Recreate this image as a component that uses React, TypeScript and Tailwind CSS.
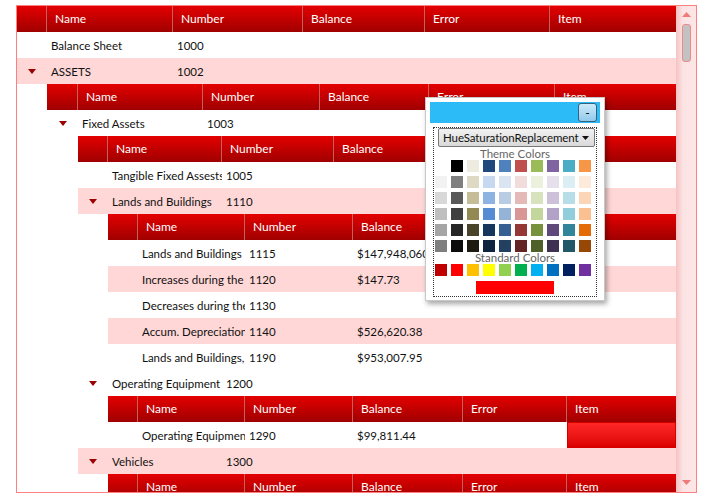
import React from 'react';

type Node = {
  name: string;
  number: string;
  balance?: string;
  selected?: boolean;
  children?: Node[];
};

const COLS = [
  'grid-cols-[126fr_130fr_122fr_125fr_126fr]',
  'grid-cols-[125fr_117fr_109fr_126fr_121fr]',
  'grid-cols-[114fr_112fr_114fr_114fr_114fr]',
  'grid-cols-[107fr_108fr_110fr_104fr_109fr]',
];
const IND = ['w-[30px]', 'w-[31px]', 'w-[30px]', 'w-[30px]'];
const HEADERS = ['Name', 'Number', 'Balance', 'Error', 'Item'];

const data: Node[] = [
  { name: 'Balance Sheet', number: '1000' },
  {
    name: 'ASSETS',
    number: '1002',
    children: [
      {
        name: 'Fixed Assets',
        number: '1003',
        children: [
          { name: 'Tangible Fixed Assests', number: '1005' },
          {
            name: 'Lands and Buildings',
            number: '1110',
            children: [
              { name: 'Lands and Buildings', number: '1115', balance: '$147,948,060' },
              { name: 'Increases during the Year', number: '1120', balance: '$147.73' },
              { name: 'Decreases during the Year', number: '1130' },
              { name: 'Accum. Depreciation, Buildings', number: '1140', balance: '$526,620.38' },
              { name: 'Lands and Buildings, Total', number: '1190', balance: '$953,007.95' },
            ],
          },
          {
            name: 'Operating Equipment',
            number: '1200',
            children: [
              { name: 'Operating Equipment, Total', number: '1290', balance: '$99,811.44', selected: true },
            ],
          },
          {
            name: 'Vehicles',
            number: '1300',
            children: [{ name: 'Vehicles', number: '1310', balance: '$12,500.00' }],
          },
        ],
      },
    ],
  },
];

const THEME = [
  ['#ffffff', '#000000', '#eeece1', '#1f497d', '#4f81bd', '#c0504d', '#9bbb59', '#8064a2', '#4bacc6', '#f79646'],
  ['#f2f2f2', '#7f7f7f', '#ddd9c3', '#c6d9f0', '#dbe5f1', '#f2dcdb', '#ebf1dd', '#e5e0ec', '#dbeef3', '#fdeada'],
  ['#d8d8d8', '#595959', '#c4bd97', '#8db3e2', '#b8cce4', '#e5b9b7', '#d7e3bc', '#ccc1d9', '#b7dde8', '#fbd5b5'],
  ['#bfbfbf', '#3f3f3f', '#938953', '#548dd4', '#95b3d7', '#d99694', '#c3d69b', '#b2a2c7', '#92cddc', '#fac08f'],
  ['#a5a5a5', '#262626', '#494429', '#17365d', '#366092', '#953734', '#76923c', '#5f497a', '#31859b', '#e36c09'],
  ['#7f7f7f', '#0c0c0c', '#1d1b10', '#0f243e', '#244061', '#632423', '#4f6128', '#3f3151', '#205867', '#974806'],
];
const STANDARD = ['#c00000', '#ff0000', '#ffc000', '#ffff00', '#92d050', '#00b050', '#00b0f0', '#0070c0', '#002060', '#7030a0'];

function Triangle() {
  return (
    <svg width="8" height="5" viewBox="0 0 8 5">
      <polygon points="0,0 8,0 4,5" fill="#9c0000" />
    </svg>
  );
}

function Header({ level }: { level: number }) {
  return (
    <div className="flex h-[26px] bg-linear-to-b from-[#e40000] to-[#a00000] text-white text-[12px]">
      <div className={`${IND[level]} shrink-0 border-r border-[#c46060]`} />
      <div className={`grid flex-1 ${COLS[level]}`}>
        {HEADERS.map((h, i) => (
          <div
            key={h}
            className={`flex items-center px-2 overflow-hidden whitespace-nowrap ${i < 4 ? 'border-r border-[#c46060]' : ''}`}
          >
            {h}
          </div>
        ))}
      </div>
    </div>
  );
}

function Row({ node, level, index }: { node: Node; level: number; index: number }) {
  const bg = index % 2 ? 'bg-[#ffd7d7]' : 'bg-white';
  return (
    <>
      <div className={`flex h-[26px] ${bg} text-[#111]`}>
        <div className={`${IND[level]} shrink-0 flex items-center justify-center`}>
          {node.children && <Triangle />}
        </div>
        <div className={`grid flex-1 ${COLS[level]}`}>
          <div className="flex items-center pl-1 pt-px overflow-hidden whitespace-nowrap">{node.name}</div>
          <div className="flex items-center pl-1 pt-px overflow-hidden whitespace-nowrap">{node.number}</div>
          <div className="flex items-center pl-1 pt-px overflow-hidden whitespace-nowrap">{node.balance}</div>
          <div />
          {node.selected ? (
            <div className="bg-linear-to-b from-[#ff2626] to-[#dc0000] border border-[#d40000]" />
          ) : (
            <div />
          )}
        </div>
      </div>
      {node.children && (
        <div className="flex">
          <div className={`${IND[level]} shrink-0`} />
          <div className="flex-1 min-w-0">
            <Grid rows={node.children} level={level + 1} />
          </div>
        </div>
      )}
    </>
  );
}

function Grid({ rows, level }: { rows: Node[]; level: number }) {
  return (
    <div>
      <Header level={level} />
      {rows.map((r, i) => (
        <Row key={r.number} node={r} level={level} index={i} />
      ))}
    </div>
  );
}

function Scrollbar() {
  return (
    <div className="w-[20px] h-full shrink-0 flex flex-col items-center bg-[linear-gradient(to_right,#f5c2c2,#fde4e4_35%,#fde6e6)]">
      <svg width="9" height="5" viewBox="0 0 9 5" className="mt-[6px]">
        <polygon points="0,5 9,5 4.5,0" fill="#ee7a7a" />
      </svg>
      <div className="mt-[7px] w-[9px] h-[38px] rounded-[3px] bg-[#c2c2c2] border border-[#f08a8a]" />
      <div className="flex-1" />
      <svg width="9" height="5" viewBox="0 0 9 5" className="mb-[7px]">
        <polygon points="0,0 9,0 4.5,5" fill="#ee7a7a" />
      </svg>
    </div>
  );
}

function ColorPicker() {
  return (
    <div className="absolute left-[425px] top-[97px] w-[180px] h-[204px] bg-white border border-[#c8c8c8] shadow-[2px_3px_5px_rgba(0,0,0,0.35)] px-[4px] pt-[4px]">
      <div className="h-[21px] bg-[#2dbbf7] flex justify-end items-center pr-[3px]">
        <div className="w-[19px] h-[19px] rounded-[3px] border border-[#35627c] bg-linear-to-b from-[#cdeaf9] to-[#92c9ea] flex items-center justify-center text-[12px] leading-none text-black">
          -
        </div>
      </div>
      <div className="mt-[4px] mx-[3px] h-[170px] border border-dotted border-[#333]">
        <div className="ml-[4px] mr-[1px] h-[19px] rounded-[2px] border border-[#777] bg-linear-to-b from-[#f2f2f2] to-[#d9d9d9] flex items-center justify-between pl-[4px] pr-[5px] text-[11.5px] tracking-[-0.1px] text-[#111] overflow-hidden">
          <span className="whitespace-nowrap">HueSaturationReplacement</span>
          <svg width="7" height="4" viewBox="0 0 7 4" className="shrink-0">
            <polygon points="0,0 7,0 3.5,4" fill="#111" />
          </svg>
        </div>
        <div className="h-[13px] leading-[14px] text-center text-[11.5px] text-[#666]">Theme Colors</div>
        <div className="pl-[1px] grid grid-cols-[repeat(10,12px)] gap-[4px]">
          {THEME.flat().map((c, i) => (
            <div key={i} className="w-[12px] h-[12px]" style={{ backgroundColor: c }} />
          ))}
        </div>
        <div className="h-[12px] leading-[11px] text-center text-[11.5px] text-[#666]">Standard Colors</div>
        <div className="pl-[1px] grid grid-cols-[repeat(10,12px)] gap-[4px]">
          {STANDARD.map((c, i) => (
            <div key={i} className="w-[12px] h-[12px]" style={{ backgroundColor: c }} />
          ))}
        </div>
        <div className="mt-[5px] mx-auto w-[78px] h-[13px] bg-[#ff0000]" />
      </div>
    </div>
  );
}

export default function App() {
  return (
    <div className="relative w-[715px] h-[500px] bg-white overflow-hidden pl-[16px] pt-[5px] font-['Lato','Liberation_Sans',sans-serif] text-[11.5px]">
      <div className="flex w-[681px] h-[488px] border border-[#ff8080]">
        <div className="flex-1 min-w-0 h-full overflow-hidden">
          <Grid rows={data} level={0} />
        </div>
        <Scrollbar />
      </div>
      <ColorPicker />
    </div>
  );
}
